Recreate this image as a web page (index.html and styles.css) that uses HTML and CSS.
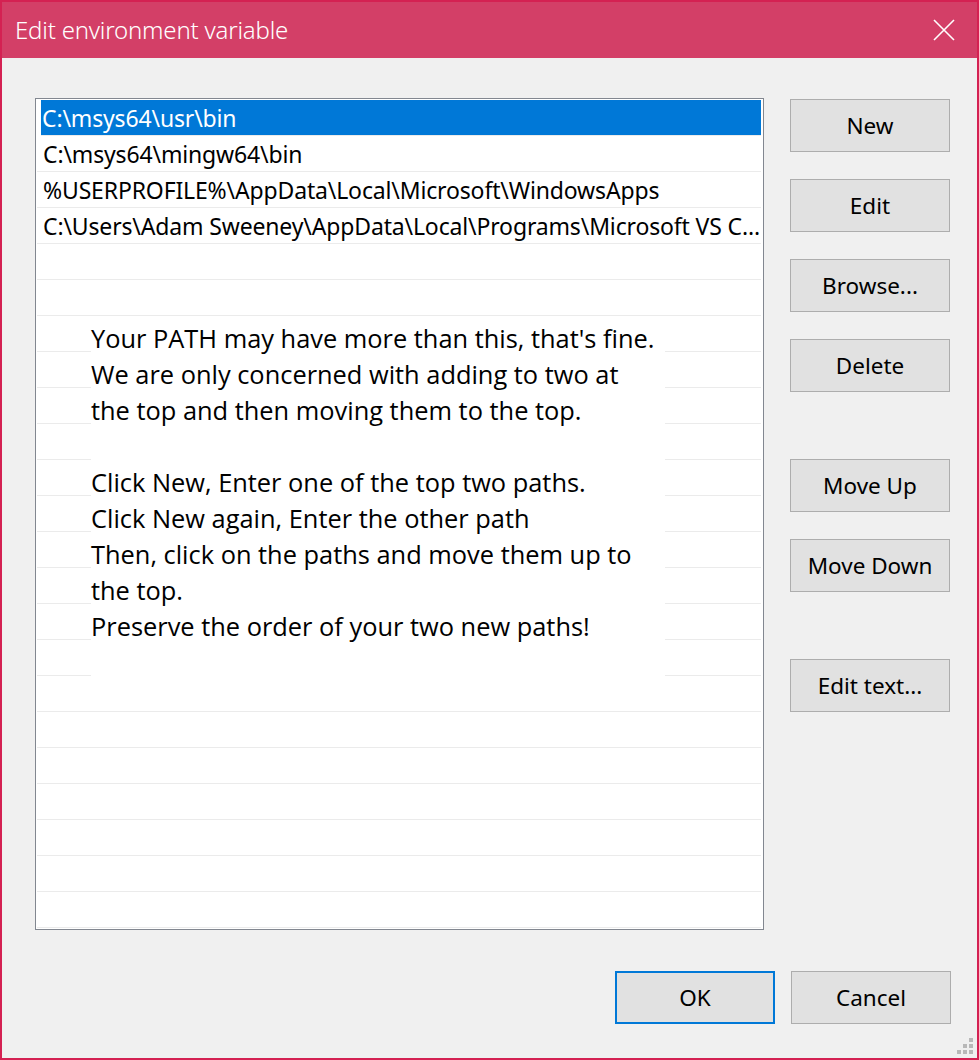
FILE: index.html
```html
<!DOCTYPE html>
<html>
<head>
<meta charset="utf-8">
<link rel="stylesheet" href="styles.css">
</head>
<body>
<div class="window">
  <div class="titlebar">
    <span class="title">Edit environment variable</span>
    <svg class="close" width="22" height="22" viewBox="0 0 22 22"><path d="M1 1 L21 21 M21 1 L1 21" stroke="#fff" stroke-width="1.6" fill="none"/></svg>
  </div>
  <div class="content">
    <div class="main">
      <div class="list">
        <div class="row selected"><span>C:\msys64\usr\bin</span></div>
        <div class="row"><span>C:\msys64\mingw64\bin</span></div>
        <div class="row"><span>%USERPROFILE%\AppData\Local\Microsoft\WindowsApps</span></div>
        <div class="row"><span>C:\Users\Adam Sweeney\AppData\Local\Programs\Microsoft VS C...</span></div>
        <div class="row"></div><div class="row"></div><div class="row"></div><div class="row"></div>
        <div class="row"></div><div class="row"></div><div class="row"></div><div class="row"></div>
        <div class="row"></div><div class="row"></div><div class="row"></div><div class="row"></div>
        <div class="row"></div><div class="row"></div><div class="row"></div><div class="row"></div>
        <div class="row"></div><div class="row"></div><div class="row"></div>
        <div class="note">
          <p>Your PATH may have more than this, that's fine.</p>
          <p>We are only concerned with adding to two at</p>
          <p>the top and then moving them to the top.</p>
          <p>&nbsp;</p>
          <p>Click New, Enter one of the top two paths.</p>
          <p>Click New again, Enter the other path</p>
          <p>Then, click on the paths and move them up to</p>
          <p>the top.</p>
          <p>Preserve the order of your two new paths!</p>
        </div>
      </div>
      <div class="side">
        <button class="btn">New</button>
        <button class="btn">Edit</button>
        <button class="btn">Browse...</button>
        <button class="btn">Delete</button>
        <div class="spacer"></div>
        <button class="btn">Move Up</button>
        <button class="btn">Move Down</button>
        <div class="spacer"></div>
        <button class="btn">Edit text...</button>
      </div>
    </div>
    <div class="footer">
      <button class="btn default">OK</button>
      <button class="btn">Cancel</button>
    </div>
  </div>
  <div class="grip">
    <i class="d1"></i><i class="d2"></i><i class="d3"></i><i class="d4"></i><i class="d5"></i><i class="d6"></i>
  </div>
</div>
</body>
</html>
```
FILE: styles.css
```css
html, body {
  margin: 0;
  padding: 0;
  background: #f0f0f0;
}
.window {
  position: relative;
  width: 979px;
  height: 1060px;
  box-sizing: border-box;
  border: 2px solid #d42152;
  background: #f0f0f0;
  font-family: "Noto Sans", "Open Sans", sans-serif;
  color: #000;
  overflow: hidden;
}
.titlebar {
  height: 56px;
  background: #d33f67;
  display: flex;
  align-items: center;
  justify-content: space-between;
  padding: 0 22px 0 13px;
}
.title {
  color: #fff;
  font-size: 24px;
  font-weight: 300;
  letter-spacing: -0.2px;
  margin-top: -2px;
}
.close {
  display: block;
  margin-top: 0px;
}
.content {
  padding: 40px 26px 0 33px;
}
.main {
  display: flex;
  gap: 26px;
  align-items: flex-start;
}
.list {
  position: relative;
  width: 729px;
  height: 832px;
  box-sizing: border-box;
  border: 1px solid #828790;
  background: #fff;
  padding: 1px 2px 0 1px;
}
.row {
  height: 35px;
  border-bottom: 1px solid #ebebeb;
  font-size: 23px;
  line-height: 36px;
  padding-left: 6px;
  padding-right: 2px;
  white-space: nowrap;
  overflow: hidden;
  letter-spacing: -0.15px;
}
.row.selected {
  background: #0078d7;
  color: #fff;
  margin-left: 4px;
  padding-left: 1px;
}
.note {
  position: absolute;
  left: 55px;
  top: 217px;
  width: 574px;
  height: 385px;
  background: #fff;
  padding-top: 4px;
  box-sizing: border-box;
}
.note p {
  margin: 0;
  font-family: "Open Sans", "Noto Sans", sans-serif;
  font-size: 25.4px;
  line-height: 36px;
  white-space: nowrap;
}
.side {
  display: flex;
  flex-direction: column;
  gap: 27px;
  margin-top: 1px;
}
.spacer {
  height: 13px;
}
.btn {
  width: 160px;
  height: 53px;
  box-sizing: border-box;
  border: 1px solid #adadad;
  background: #e1e1e1;
  font-family: "Noto Sans", "Open Sans", sans-serif;
  font-size: 22.5px;
  color: #000;
  padding: 0;
  margin: 0;
}
.btn.default {
  border: 2px solid #0078d7;
}
.footer {
  display: flex;
  justify-content: flex-end;
  gap: 16px;
  margin-top: 41px;
}
.grip {
  position: absolute;
  right: 0;
  bottom: 0;
  width: 20px;
  height: 20px;
}
.grip i {
  position: absolute;
  width: 4px;
  height: 4px;
  background: #b8b8b8;
}
.grip .d1 { left: 12px; top: 0; }
.grip .d2 { left: 6px; top: 6px; }
.grip .d3 { left: 12px; top: 6px; }
.grip .d4 { left: 0; top: 12px; }
.grip .d5 { left: 6px; top: 12px; }
.grip .d6 { left: 12px; top: 12px; }
```
